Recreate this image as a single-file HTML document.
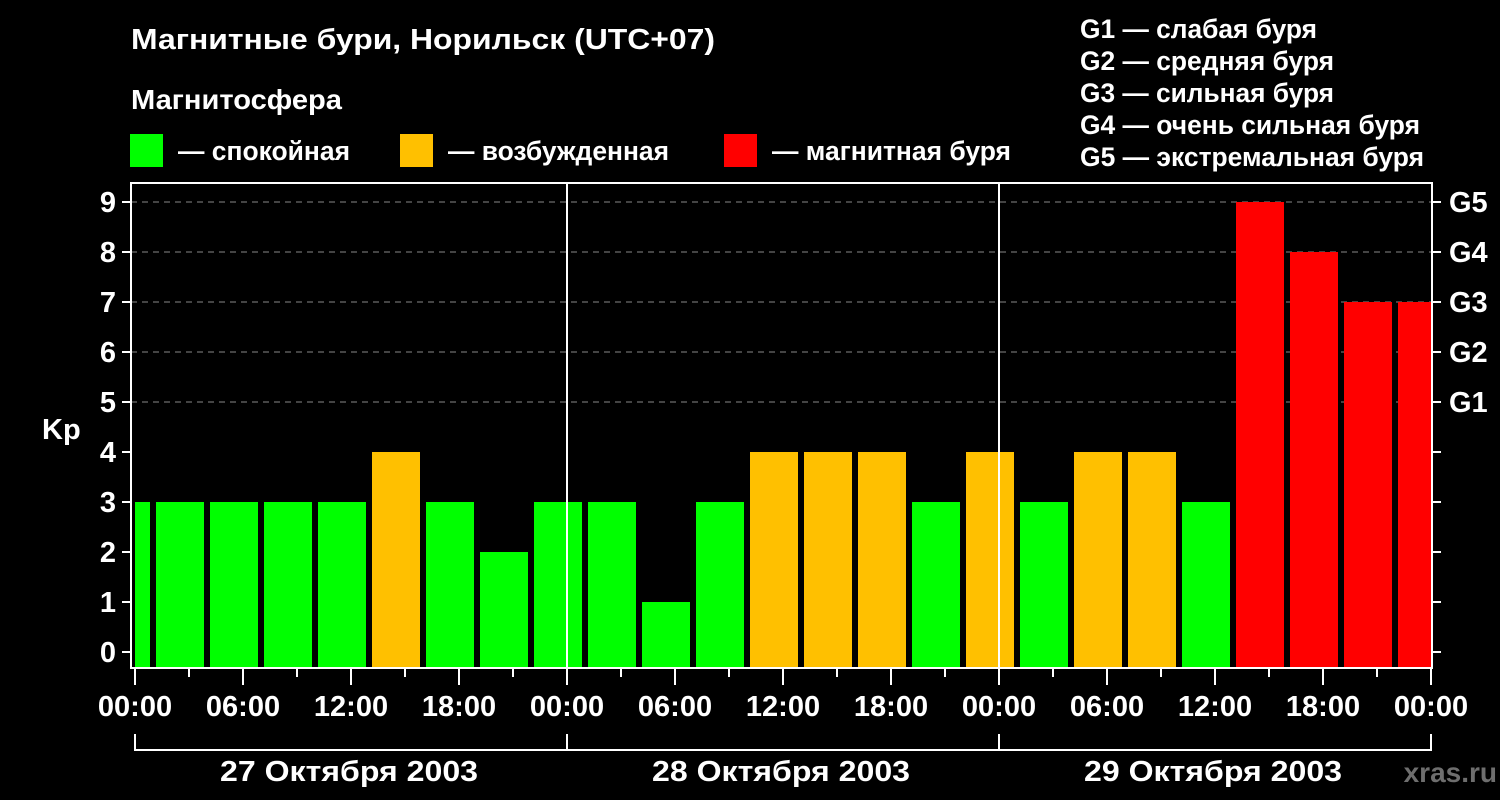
<!DOCTYPE html>
<html><head><meta charset="utf-8"><style>
html,body{margin:0;padding:0;background:#000;width:1500px;height:800px;overflow:hidden}
svg{display:block}
text{font-family:"Liberation Sans",sans-serif;font-weight:bold;fill:#fff}
</style></head><body>
<svg width="1500" height="800" viewBox="0 0 1500 800" xmlns="http://www.w3.org/2000/svg">
<rect width="1500" height="800" fill="#000"/>
<text x="131" y="49" font-size="29" textLength="584" lengthAdjust="spacingAndGlyphs">Магнитные бури, Норильск (UTC+07)</text>
<text x="131" y="109" font-size="28" textLength="211" lengthAdjust="spacingAndGlyphs">Магнитосфера</text>
<rect x="130" y="134" width="33" height="33" fill="#00ff00"/>
<text x="178" y="160" font-size="27" textLength="172" lengthAdjust="spacingAndGlyphs">— спокойная</text>
<rect x="400" y="134" width="33" height="33" fill="#ffc000"/>
<text x="448" y="160" font-size="27" textLength="221" lengthAdjust="spacingAndGlyphs">— возбужденная</text>
<rect x="724" y="134" width="33" height="33" fill="#ff0000"/>
<text x="772" y="160" font-size="27" textLength="239" lengthAdjust="spacingAndGlyphs">— магнитная буря</text>
<g font-size="27">
<text x="1080" y="38" textLength="237" lengthAdjust="spacingAndGlyphs">G1 — слабая буря</text>
<text x="1080" y="70" textLength="254" lengthAdjust="spacingAndGlyphs">G2 — средняя буря</text>
<text x="1080" y="102" textLength="254" lengthAdjust="spacingAndGlyphs">G3 — сильная буря</text>
<text x="1080" y="134" textLength="340" lengthAdjust="spacingAndGlyphs">G4 — очень сильная буря</text>
<text x="1080" y="166" textLength="344" lengthAdjust="spacingAndGlyphs">G5 — экстремальная буря</text>
</g>
<g stroke="#888" stroke-width="1" stroke-dasharray="6,5">
<line x1="131" y1="202" x2="1432" y2="202"/>
<line x1="131" y1="252" x2="1432" y2="252"/>
<line x1="131" y1="302" x2="1432" y2="302"/>
<line x1="131" y1="352" x2="1432" y2="352"/>
<line x1="131" y1="402" x2="1432" y2="402"/>
</g>
<g fill="#00ff00">
<rect x="135" y="502" width="15" height="166"/>
<rect x="156" y="502" width="48" height="166"/>
<rect x="210" y="502" width="48" height="166"/>
<rect x="264" y="502" width="48" height="166"/>
<rect x="318" y="502" width="48" height="166"/>
<rect x="426" y="502" width="48" height="166"/>
<rect x="480" y="552" width="48" height="116"/>
<rect x="534" y="502" width="48" height="166"/>
<rect x="588" y="502" width="48" height="166"/>
<rect x="642" y="602" width="48" height="66"/>
<rect x="696" y="502" width="48" height="166"/>
<rect x="912" y="502" width="48" height="166"/>
<rect x="1020" y="502" width="48" height="166"/>
<rect x="1182" y="502" width="48" height="166"/>
</g>
<g fill="#ffc000">
<rect x="372" y="452" width="48" height="216"/>
<rect x="750" y="452" width="48" height="216"/>
<rect x="804" y="452" width="48" height="216"/>
<rect x="858" y="452" width="48" height="216"/>
<rect x="966" y="452" width="48" height="216"/>
<rect x="1074" y="452" width="48" height="216"/>
<rect x="1128" y="452" width="48" height="216"/>
</g>
<g fill="#ff0000">
<rect x="1236" y="202" width="48" height="466"/>
<rect x="1290" y="252" width="48" height="416"/>
<rect x="1344" y="302" width="48" height="366"/>
<rect x="1398" y="302" width="34" height="366"/>
</g>
<g stroke="#fff" stroke-width="2" fill="none">
<rect x="131" y="183" width="1301" height="485"/>
<line x1="567" y1="183" x2="567" y2="668"/>
<line x1="999" y1="183" x2="999" y2="668"/>
<path d="M122 202h9M122 252h9M122 302h9M122 352h9M122 402h9M122 452h9M122 502h9M122 552h9M122 602h9M122 652h9"/>
<path d="M1432 202h9M1432 252h9M1432 302h9M1432 352h9M1432 402h9M1432 452h9M1432 502h9M1432 552h9M1432 602h9M1432 652h9"/>
<path d="M135 669v16M189 669v8M243 669v16M297 669v8M351 669v16M405 669v8M459 669v16M513 669v8M567 669v16M621 669v8M675 669v16M729 669v8M783 669v16M837 669v8M891 669v16M945 669v8M999 669v16M1053 669v8M1107 669v16M1161 669v8M1215 669v16M1269 669v8M1323 669v16M1377 669v8M1431 669v16"/>
<path d="M135 734v16H1431V734M567 734v16M999 734v16"/>
</g>
<g font-size="29" text-anchor="end">
<text x="116" y="212">9</text><text x="116" y="262">8</text><text x="116" y="312">7</text>
<text x="116" y="362">6</text><text x="116" y="412">5</text><text x="116" y="462">4</text>
<text x="116" y="512">3</text><text x="116" y="562">2</text><text x="116" y="612">1</text>
<text x="116" y="662">0</text>
</g>
<text x="42" y="439" font-size="29">Kp</text>
<g font-size="29">
<text x="1449" y="212">G5</text><text x="1449" y="262">G4</text><text x="1449" y="312">G3</text>
<text x="1449" y="362">G2</text><text x="1449" y="412">G1</text>
</g>
<g font-size="29" text-anchor="middle">
<text x="135" y="716">00:00</text><text x="243" y="716">06:00</text><text x="351" y="716">12:00</text><text x="459" y="716">18:00</text>
<text x="567" y="716">00:00</text><text x="675" y="716">06:00</text><text x="783" y="716">12:00</text><text x="891" y="716">18:00</text>
<text x="999" y="716">00:00</text><text x="1107" y="716">06:00</text><text x="1215" y="716">12:00</text><text x="1323" y="716">18:00</text>
<text x="1431" y="716">00:00</text>
</g>
<g font-size="29">
<text x="220" y="781" textLength="258" lengthAdjust="spacingAndGlyphs">27 Октября 2003</text>
<text x="652" y="781" textLength="258" lengthAdjust="spacingAndGlyphs">28 Октября 2003</text>
<text x="1084" y="781" textLength="258" lengthAdjust="spacingAndGlyphs">29 Октября 2003</text>
</g>
<text x="1497" y="782" font-size="28" text-anchor="end" style="fill:#6e6e6e">xras.ru</text>
</svg>
</body></html>
